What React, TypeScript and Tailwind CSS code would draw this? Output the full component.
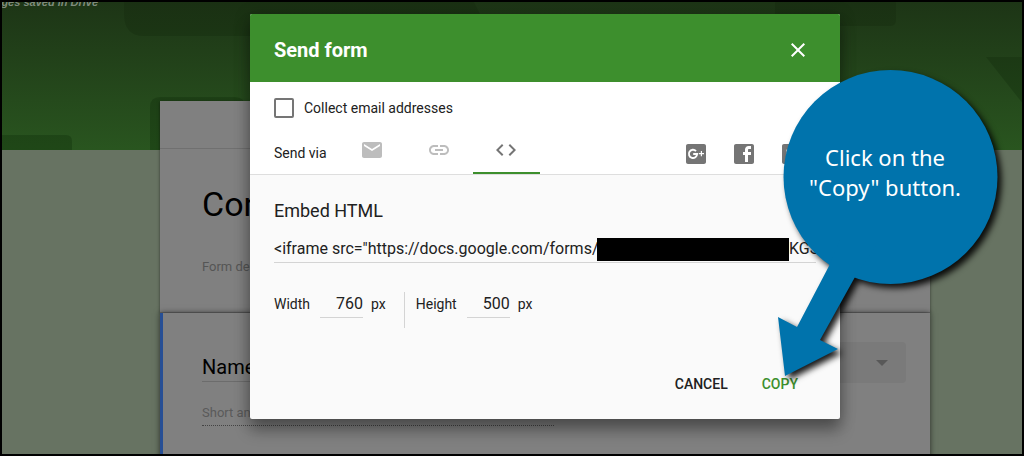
import React, { useState } from 'react';
import { MdClose, MdCode, MdEmail, MdLink } from 'react-icons/md';

const BOX_PATH =
  'M20 2H4c-1.1 0-1.99.9-1.99 2L2 20c0 1.1.9 2 2 2h16c1.1 0 2-.9 2-2V4c0-1.1-.9-2-2-2z';

// The middle of the form id is blank, the redaction bar lies over it
const EMBED_CODE = `<iframe src="https://docs.google.com/forms/${'\u00a0'.repeat(48)}KGS`;

const GooglePlusIcon: React.FC = () => (
  <svg viewBox="0 0 24 24" className="size-6" aria-hidden="true">
    <path d={BOX_PATH} fill="#757575" />
    <path
      d="M12 9.1A4.1 4.1 0 1 0 13.1 12H9.2"
      fill="none"
      stroke="#fff"
      strokeWidth="1.9"
    />
    <path d="M17.4 9.1v5.2M14.8 11.7H20" stroke="#fff" strokeWidth="1.2" />
  </svg>
);

const FacebookIcon: React.FC = () => (
  <svg viewBox="0 0 24 24" className="size-6" aria-hidden="true">
    <path
      d={`${BOX_PATH}m-1 2v3h-2c-.55 0-1 .45-1 1v2h3v3h-3v7h-3v-7h-2v-3h2V7.5C13 5.57 14.57 4 16.5 4H19z`}
      fill="#757575"
    />
  </svg>
);

const TwitterIcon: React.FC = () => (
  <svg viewBox="0 0 24 24" className="size-6" aria-hidden="true">
    <path
      d={`${BOX_PATH}m-2.29 7.33c-.09 4.7-3.06 7.92-7.48 8.11-1.82.08-3.14-.51-4.27-1.24 1.34.22 3-.32 3.9-1.08-1.32-.13-2.1-.8-2.46-1.88.38.06.78.05 1.14-.03-1.19-.4-2.03-1.13-2.08-2.67.33.15.68.29 1.14.32-.88-.51-1.54-2.37-.78-3.6 1.32 1.45 2.92 2.63 5.52 2.8-.66-2.8 3.06-4.33 4.61-2.45.66-.13 1.2-.38 1.71-.65-.21.65-.62 1.11-1.12 1.47.55-.07 1.04-.22 1.46-.43-.26.53-.84 1.02-1.29 1.33z`}
      fill="#757575"
    />
  </svg>
);

// Green theme banner behind the form
const Banner: React.FC = () => (
  <div className="absolute inset-x-0 top-0 h-37 overflow-hidden bg-linear-to-b from-[#1d3516] to-[#29551f]">
    <svg width="1020" height="148" viewBox="2 2 1020 148" aria-hidden="true">
      <defs>
        <linearGradient id="shape" x1="0" y1="0" x2="0" y2="150" gradientUnits="userSpaceOnUse">
          <stop offset="0" stopColor="#1a3013" />
          <stop offset="1" stopColor="#1f4717" />
        </linearGradient>
      </defs>
      <g fill="url(#shape)">
        <path d="M124 0H473L480 14V36H144Q124 36 124 14z" />
        <path d="M0 135H66Q72 135 72 141V152H0z" />
        <path d="M150 152V107Q150 97 160 97H235Q245 97 245 107V152z" />
        <path d="M775 0H896V20Q896 26 890 26H775z" />
        <path d="M986 57H1024V105z" />
      </g>
    </svg>
  </div>
);

const FormEditor: React.FC = () => (
  <div className="relative pl-[66px] pt-[99px]">
    <div className="mx-auto max-w-[770px]">
      <section className="bg-[#808080] shadow-[0_1px_3px_rgba(0,0,0,0.5)]">
        <div className="h-12 border-b border-[#707070]" />
        <div className="h-[164px] px-[42px] pt-7 border-b border-[#686868]">
          <h1 className="text-[34px] leading-[54px] text-black">Con</h1>
          <p className="mt-6 text-[13px] leading-6 text-[#555]">Form description</p>
        </div>
      </section>
      <section className="relative h-[200px] border-l-3 border-[#274f95] bg-[#808080] pl-[39px] pr-6 pt-[29px] shadow-[0_0_6px_rgba(0,0,0,0.6)]">
        <div className="flex items-start justify-between gap-6">
          <input
            aria-label="Question"
            defaultValue="Name"
            className="mt-2.5 h-[30px] min-w-0 flex-1 border-b border-[#6c6c6c] bg-transparent text-xl text-black outline-none"
          />
          <div className="relative">
            <select
              aria-label="Question type"
              className="h-[41px] w-[220px] appearance-none rounded-sm bg-[#7a7a7a] px-4 text-sm text-black"
            >
              <option>Short answer</option>
            </select>
            <svg
              viewBox="0 0 12 6"
              className="pointer-events-none absolute right-[18px] top-[18px] h-1.5 w-3"
              aria-hidden="true"
            >
              <path d="M0 0h12L6 6z" fill="#585858" />
            </svg>
          </div>
        </div>
        <p className="mt-5 h-[23px] w-[352px] border-b border-dotted border-[#444] text-[13px] leading-5 text-[#5a5a5a]">
          Short answer text
        </p>
      </section>
    </div>
  </div>
);

// Speech balloon with an arrow pointing at the Copy button
const Callout: React.FC = () => (
  <div className="pointer-events-none absolute left-[520px] top-12 h-[340px] w-[250px]">
    <svg viewBox="770 62 250 340" className="h-full w-full overflow-visible" aria-hidden="true">
      <g className="drop-shadow-[4px_4px_3px_rgba(0,0,0,0.9)]" fill="#0073ac">
        <circle cx="890.5" cy="177" r="107" />
        <path d="M829 266L797 327L778 317L785 376L838 349L820 340L855 277L880 240L840 240z" />
      </g>
    </svg>
    <p className="absolute inset-x-0 top-20 pr-5 text-center font-['Noto_Sans',sans-serif] text-[22px] leading-[30px] text-white">
      Click on the
      <br />
      "Copy" button.
    </p>
  </div>
);

interface SizeFieldProps {
  id: string;
  label: string;
  value: string;
  onChange: (value: string) => void;
}

const SizeField: React.FC<SizeFieldProps> = ({ id, label, value, onChange }) => (
  <div className="flex items-center">
    <label htmlFor={id} className="text-sm">
      {label}
    </label>
    <input
      id={id}
      value={value}
      onChange={(e) => onChange(e.target.value)}
      className="ml-2.5 h-7 w-[43px] border-b border-[#d4d4d4] bg-transparent text-right text-base outline-none"
    />
    <span className="ml-2 text-sm">px</span>
  </div>
);

const SendDialog: React.FC = () => {
  const [collect, setCollect] = useState(false);
  const [width, setWidth] = useState('760');
  const [height, setHeight] = useState('500');

  return (
    <div
      role="dialog"
      aria-label="Send form"
      className="relative h-fit w-full max-w-[590px] rounded-xs bg-[#fafafa] text-[#212121] shadow-[0_12px_15px_rgba(0,0,0,0.3),0_2px_16px_rgba(0,0,0,0.25)]"
    >
      <header className="flex h-17 items-center justify-between rounded-t-xs bg-[#3d8f2d] pl-6 pr-[30px] pt-1 text-white">
        <h2 className="text-xl font-bold">Send form</h2>
        <button type="button" aria-label="Close">
          <MdClose className="size-6" />
        </button>
      </header>

      <div className="border-b border-[#dedede] bg-white px-6 pt-4">
        <label className="flex h-5 items-center gap-2.5 text-sm">
          <input
            type="checkbox"
            checked={collect}
            onChange={(e) => setCollect(e.target.checked)}
            className="size-5 appearance-none rounded-xs border-2 border-[#757575] checked:bg-[#3d8f2d]"
          />
          Collect email addresses
        </label>

        <div className="mt-2 flex h-12 items-center">
          <span className="w-[65px] pt-1.5 text-sm">Send via</span>
          <div role="tablist" className="flex h-full text-[#bdbdbd]">
            <button type="button" role="tab" aria-label="Email" className="flex w-[67px] pl-[21px] pt-3">
              <MdEmail className="size-6" />
            </button>
            <button type="button" role="tab" aria-label="Link" className="flex w-[67px] pl-[21px] pt-3">
              <MdLink className="size-6" />
            </button>
            <button
              type="button"
              role="tab"
              aria-selected="true"
              aria-label="Embed HTML"
              className="flex w-[67px] border-b-2 border-[#3d8f2d] pl-[21px] pt-3 text-[#757575]"
            >
              <MdCode className="size-6" />
            </button>
          </div>
          <div className="ml-auto flex gap-6 pr-3 pt-2">
            <a href="#google-plus" aria-label="Google+">
              <GooglePlusIcon />
            </a>
            <a href="#facebook" aria-label="Facebook">
              <FacebookIcon />
            </a>
            <a href="#twitter" aria-label="Twitter">
              <TwitterIcon />
            </a>
          </div>
        </div>
      </div>

      <div className="px-6 pt-6">
        <label htmlFor="embed" className="block text-lg leading-6">
          Embed HTML
        </label>
        <div className="relative mt-3">
          <input
            id="embed"
            readOnly
            value={EMBED_CODE}
            className="h-7 w-full border-b border-[#d4d4d4] bg-transparent text-base outline-none"
          />
          <div className="absolute left-[323px] top-[3px] h-[23px] w-48 bg-black" />
        </div>

        <div className="mt-[27px] flex h-[38px] items-start">
          <SizeField id="width" label="Width" value={width} onChange={setWidth} />
          <div className="ml-[18px] mr-[11px] h-9 w-px self-end bg-[#d4d4d4]" />
          <SizeField id="height" label="Height" value={height} onChange={setHeight} />
        </div>

        <div className="mt-[38px] flex h-[53px] items-start justify-end gap-[34px] pr-[18px] text-sm font-medium">
          <button type="button" className="h-9">
            CANCEL
          </button>
          <button type="button" className="h-9 text-[#3d8f2d]">
            COPY
          </button>
        </div>
      </div>

      <Callout />
    </div>
  );
};

const App: React.FC = () => {
  return (
    <div className="relative h-screen overflow-hidden border-2 border-black bg-[#677362] font-[Roboto,sans-serif]">
      <Banner />
      <div className="absolute left-0 top-0 flex h-2 w-24 items-end justify-end whitespace-nowrap font-['Liberation_Sans',sans-serif] text-[11px] leading-4 font-bold italic text-[#7f8b7c]">
        All changes saved in Drive
      </div>
      <FormEditor />
      <div className="absolute inset-0 flex justify-center pl-[66px] pt-3">
        <SendDialog />
      </div>
    </div>
  );
};

export default App;
